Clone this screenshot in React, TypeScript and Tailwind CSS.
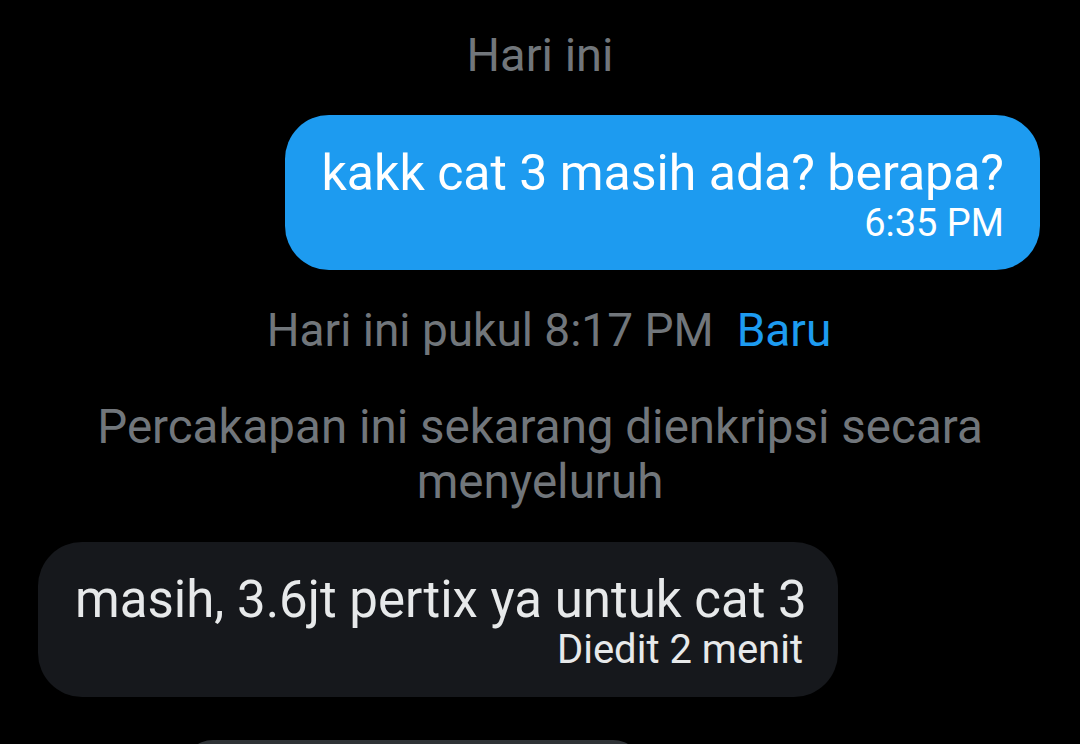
import React from 'react';

const font = { fontFamily: 'Roboto, "Noto Sans", sans-serif' };

const App: React.FC = () => {
  return (
    <div className="w-[1080px] h-[744px] overflow-hidden bg-black flex flex-col" style={font}>
      {/* day label */}
      <div className="pt-[27px] text-center text-[47px] leading-[56px] text-[#71767b]">Hari ini</div>

      {/* outgoing message */}
      <div className="mt-[32px] flex justify-end pr-[40px]">
        <div className="bg-[#1d9bf0] rounded-[44px] w-[755px] h-[155px] pl-[30px] pr-[36px] pt-[28px] flex flex-col items-end text-white">
          <div className="text-[50px] leading-[60px] whitespace-nowrap">kakk cat 3 masih ada? berapa?</div>
          <div className="text-[38px] leading-[40px]">6:35 PM</div>
        </div>
      </div>

      {/* read status */}
      <div className="mt-[32px] pl-[18px] flex justify-center gap-[23px] text-[46px] leading-[56px]">
        <span className="text-[#71767b]">Hari ini pukul 8:17 PM</span>
        <span className="text-[#1d9bf0]">Baru</span>
      </div>

      {/* encryption notice */}
      <div className="mt-[42px] px-[60px] text-center text-[47.5px] leading-[55px] text-[#71767b]">
        Percakapan ini sekarang dienkripsi secara menyeluruh
      </div>

      {/* incoming message */}
      <div className="mt-[32px] pl-[38px]">
        <div className="bg-[#16181c] rounded-[44px] w-[800px] h-[155px] pl-[37px] pr-[35px] pt-[28px] flex flex-col items-end text-[#e7e9ea]">
          <div className="text-[51px] leading-[60px] self-start whitespace-nowrap">masih, 3.6jt pertix ya untuk cat 3</div>
          <div className="text-[40px] leading-[40px]">Diedit 2 menit</div>
        </div>
      </div>

      {/* next bubble peeking in */}
      <div className="mt-[43px] pl-[183px]">
        <div className="w-[460px] h-[60px] rounded-[30px] bg-[#2f3336]" />
      </div>
    </div>
  );
};

export default App;
